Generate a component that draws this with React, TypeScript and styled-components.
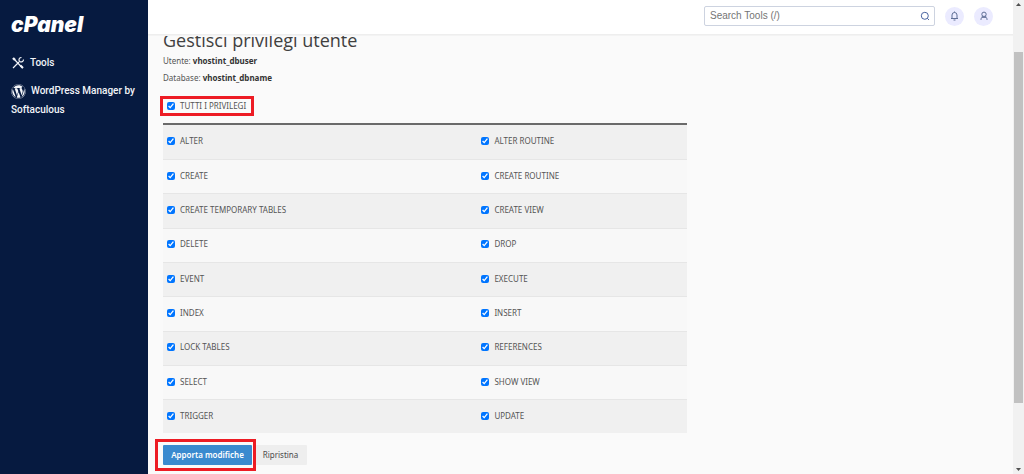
import React, { useState } from "react";
import styled, { createGlobalStyle } from "styled-components";
import { FaWordpress } from "react-icons/fa";

const GlobalStyle = createGlobalStyle`
  *, *::before, *::after { box-sizing: border-box; }
  body {
    margin: 0;
    background: #fafafa;
    color: #555;
    font-family: "Noto Sans", sans-serif;
    font-size: 8px;
    line-height: 12px;
  }
`;

const Page = styled.div`
  display: flex;
  height: 100vh;
  overflow: hidden;
`;

const Sidebar = styled.nav`
  flex: 0 0 148px;
  padding: 13px 11px;
  background: #061a40;
  color: #fff;
  font-family: Roboto, sans-serif;
`;

const Logo = styled.a`
  display: block;
  height: 24px;
  color: #fff;
  font: italic 900 21px/24px Inter, sans-serif;
  text-decoration: none;
`;

const NavLink = styled.a`
  display: block;
  margin-top: 16px;
  color: #f2f4f8;
  font-size: 10px;
  font-weight: 500;
  line-height: 19px;
  text-decoration: none;
  white-space: nowrap;

  & + & { margin-top: 9px; }
  svg { margin-right: 5px; vertical-align: middle; }
`;

const Content = styled.div`
  flex: 1;
  min-width: 0;
`;

const Header = styled.header`
  position: relative;
  z-index: 1;
  display: flex;
  align-items: center;
  justify-content: flex-end;
  gap: 10px;
  height: 35px;
  padding: 0 20px 2px;
  background: #fff;
  border-bottom: 1px solid #eee;
  box-shadow: 0 1px #f3f3f3;
`;

const Search = styled.form`
  display: flex;
  align-items: center;
  width: 231px;
  height: 20px;
  border: 1px solid #cdd3e0;
  border-radius: 2px;
  background: #fff;
`;

const SearchInput = styled.input`
  flex: 1;
  min-width: 0;
  padding: 0 5px;
  border: 0;
  outline: 0;
  background: none;
  font: 10px/16px "Liberation Sans", sans-serif;

  &::placeholder { color: #757575; opacity: 1; }
`;

const SearchButton = styled.button`
  display: flex;
  padding: 0 4px;
  border: 0;
  background: none;
  color: #4a64a0;
`;

const RoundButton = styled.button`
  display: flex;
  align-items: center;
  justify-content: center;
  width: 19px;
  height: 19px;
  padding: 0;
  border: 0;
  border-radius: 50%;
  background: #ebebff;
  color: #5f6f96;
`;

const Main = styled.main`
  max-width: 554px;
  padding: 0 15px;
`;

const Title = styled.h1`
  margin: -7px 0 3px;
  color: #404040;
  font-family: "Open Sans", sans-serif;
  font-size: 18px;
  font-weight: 400;
  line-height: 24px;
`;

const Detail = styled.p`
  margin: 0 0 5px;

  strong { color: #333; font-weight: 700; }
`;

const Check = styled.label`
  display: inline-flex;
  align-items: center;
  gap: 5px;
`;

const CheckBox = styled.input`
  width: 8px;
  height: 8px;
  margin: 0;
  accent-color: #0075ff;
`;

const AllRow = styled.div`
  display: flex;
  align-items: flex-start;
  height: 23px;
  margin-top: 16px;
  padding-left: 4px;
`;

const Marked = styled.span`
  position: relative;
  display: flex;

  &::after {
    position: absolute;
    inset: -6px -4px -6px -8px;
    border: 3px solid #ed1c24;
    content: "";
    pointer-events: none;
  }
`;

const AllMark = styled(Marked)`
  &::after { inset: -4px -8px -4px -7px; }
`;

const Table = styled.table`
  width: 100%;
  height: 310px;
  border-top: 2px solid #6a6a6a;
  border-collapse: collapse;
  table-layout: fixed;
`;

const Row = styled.tr`
  border-bottom: 1px solid #e6e6e6;

  &:nth-child(odd) { background: #f0f0f0; }
  &:nth-child(even) { background: #f8f8f8; }
  &:last-child { border-bottom: 0; }
`;

const Cell = styled.td`
  padding: 0 4px 1px;
  vertical-align: middle;

  &:first-child { width: 60%; }
`;

const Actions = styled.div`
  display: flex;
  gap: 2px;
  margin-top: 12px;
`;

const Button = styled.button<{ $primary?: boolean }>`
  min-width: ${(p) => (p.$primary ? "89px" : "53px")};
  height: 20px;
  padding: 0 6px;
  border: 0;
  border-radius: 1px;
  background: ${(p) => (p.$primary ? "#3a8acf" : "#eee")};
  color: ${(p) => (p.$primary ? "#fff" : "#4a4a4a")};
  font: ${(p) => (p.$primary ? 600 : 400)} 8px/12px "Noto Sans", sans-serif;
`;

const ScrollTrack = styled.div`
  display: flex;
  flex: 0 0 11px;
  flex-direction: column;
  align-items: center;
  justify-content: space-between;
  padding: 3px 1px;
  background: #f1f1f1;
`;

const ScrollThumb = styled.div`
  width: 100%;
  height: 75%;
  margin-bottom: 20px;
  background: #c1c1c1;
`;

const privileges = [
  ["ALTER", "ALTER ROUTINE"],
  ["CREATE", "CREATE ROUTINE"],
  ["CREATE TEMPORARY TABLES", "CREATE VIEW"],
  ["DELETE", "DROP"],
  ["EVENT", "EXECUTE"],
  ["INDEX", "INSERT"],
  ["LOCK TABLES", "REFERENCES"],
  ["SELECT", "SHOW VIEW"],
  ["TRIGGER", "UPDATE"],
];
const names = privileges.flat();

function ToolsIcon() {
  return (
    <svg width="14" height="14" viewBox="0 0 14 14" fill="none" stroke="currentColor" strokeWidth="1.2">
      <path d="M3.500 3.500l8 8.500M2 12l6-6" />
      <path d="M10.500 1.500c-2 0-3 1.500-2.300 3.500l.8.800c2 .6 3.500-.5 3.500-2.300" />
      <path d="M2 2l2 2" strokeWidth="2.400" />
      <path d="M9.500 9.500l2.500 2.500" strokeWidth="2" />
    </svg>
  );
}

function SearchIcon() {
  return (
    <svg width="10" height="10" viewBox="0 0 10 10" fill="none" stroke="currentColor">
      <circle cx="4.800" cy="4.800" r="3.500" />
      <path d="M7.300 7.300L9 9" />
    </svg>
  );
}

function BellIcon() {
  return (
    <svg width="9" height="10" viewBox="0 0 9 10" fill="none" stroke="currentColor">
      <path d="M1 7.500h7M2 7.500V4a2.500 2.500 0 0 1 5 0v3.500M3.500 9h2M4.500 1.500V.5" />
    </svg>
  );
}

function UserIcon() {
  return (
    <svg width="8" height="10" viewBox="0 0 8 10" fill="none" stroke="currentColor">
      <circle cx="4" cy="3.300" r="2.200" />
      <path d="M1 9V8.300C1 7 2 6.300 4 6.300S7 7 7 8.300V9M2.500 5L1.800 6.800M5.500 5l.7 1.800" />
    </svg>
  );
}

export default function App() {
  const [granted, setGranted] = useState<string[]>(names);

  const toggle = (name: string) =>
    setGranted((g) => (g.includes(name) ? g.filter((n) => n !== name) : [...g, name]));
  const all = granted.length === names.length;

  return (
    <Page>
      <GlobalStyle />
      <Sidebar>
        <Logo href="#">cPanel</Logo>
        <NavLink href="#tools"><ToolsIcon />Tools</NavLink>
        <NavLink href="#wordpress"><FaWordpress size={15} />WordPress Manager by<br />Softaculous</NavLink>
      </Sidebar>
      <Content>
        <Header>
          <Search onSubmit={(e) => e.preventDefault()}>
            <SearchInput type="text" aria-label="Search Tools" placeholder="Search Tools (/)" />
            <SearchButton aria-label="Search"><SearchIcon /></SearchButton>
          </Search>
          <RoundButton aria-label="Notifications"><BellIcon /></RoundButton>
          <RoundButton aria-label="Account"><UserIcon /></RoundButton>
        </Header>
        <Main>
          <Title>Gestisci privilegi utente</Title>
          <Detail>Utente: <strong>vhostint_dbuser</strong></Detail>
          <Detail>Database: <strong>vhostint_dbname</strong></Detail>
          <AllRow>
            <AllMark>
              <Check>
                <CheckBox type="checkbox" checked={all} onChange={() => setGranted(all ? [] : names)} />
                TUTTI I PRIVILEGI
              </Check>
            </AllMark>
          </AllRow>
          <Table>
            <tbody>
              {privileges.map((pair) => (
                <Row key={pair[0]}>
                  {pair.map((name) => (
                    <Cell key={name}>
                      <Check>
                        <CheckBox type="checkbox" checked={granted.includes(name)} onChange={() => toggle(name)} />
                        {name}
                      </Check>
                    </Cell>
                  ))}
                </Row>
              ))}
            </tbody>
          </Table>
          <Actions>
            <Marked><Button $primary>Apporta modifiche</Button></Marked>
            <Button onClick={() => setGranted(names)}>Ripristina</Button>
          </Actions>
        </Main>
      </Content>
      <ScrollTrack aria-hidden="true">
        <svg width="5" height="3" viewBox="0 0 5 3"><path d="M0 3L2.500 0L5 3z" fill="#505050" /></svg>
        <ScrollThumb />
        <svg width="5" height="3" viewBox="0 0 5 3"><path d="M0 0L2.500 3L5 0z" fill="#505050" /></svg>
      </ScrollTrack>
    </Page>
  );
}
